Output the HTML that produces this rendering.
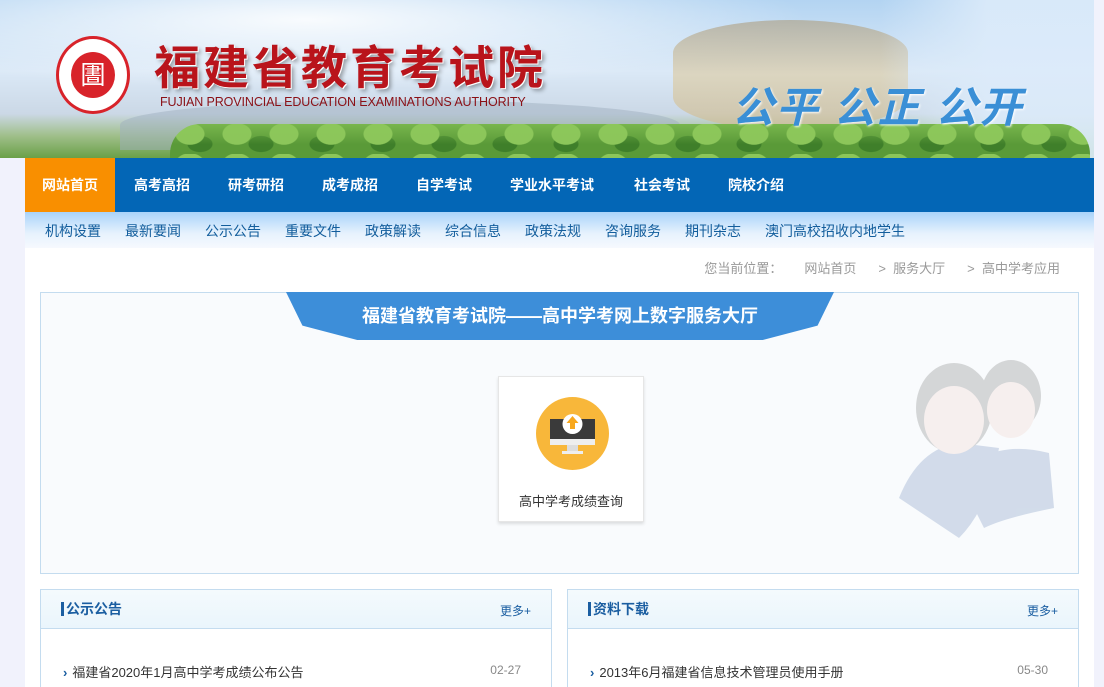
<!DOCTYPE html>
<html><head><meta charset="utf-8"><style>
*{margin:0;padding:0;box-sizing:border-box}
html,body{width:1104px;height:687px;overflow:hidden}
body{background:#f1f2fc;font-family:"Liberation Sans","Noto Sans CJK SC",sans-serif;position:relative}
.hdr{position:absolute;left:0;top:0;width:1094px;height:158px;background:linear-gradient(180deg,#b3d4f2 0%,#dbe9f7 45%,#cbd8e6 72%,#9fbf8a 86%,#6aa047 100%);overflow:hidden}
.hdr .sky{position:absolute;left:0;top:0;width:1094px;height:130px;background:radial-gradient(ellipse at 28% 15%,rgba(255,255,255,.9),rgba(255,255,255,0) 45%)}
.tulou{position:absolute;left:673px;top:20px;width:235px;height:110px;border-radius:50%/30%;background:linear-gradient(#b0a894,#dccfae 50%,#cdbd98);opacity:.75}
.fog{position:absolute;left:880px;top:0;width:214px;height:158px;background:linear-gradient(90deg,rgba(220,235,250,0),rgba(220,235,250,.9) 50%)}
.mtn{position:absolute;left:120px;top:100px;width:560px;height:50px;background:#9fb0bf;border-radius:50% 50% 0 0;opacity:.5}
.trees{position:absolute;left:170px;top:124px;width:920px;height:34px;background:linear-gradient(180deg,rgba(140,200,90,.6),rgba(60,120,40,0) 60%),radial-gradient(ellipse at 20px 10px,#8cc65a 14px,transparent 15px) 0 0/47px 30px,radial-gradient(ellipse at 30px 20px,#3f7f2a 12px,transparent 13px) 0 0/61px 34px,#5a9a38;border-radius:30px 30px 0 0}
.logo{position:absolute;left:56px;top:36px;width:74px;height:78px;border-radius:50%;background:#fff;border:3px solid #d8232a}
.logo i{position:absolute;left:12px;top:13px;width:44px;height:46px;border-radius:50%;background:#d8232a;color:#fff;font-style:normal;font-size:26px;text-align:center;line-height:46px}
.t1{position:absolute;left:154px;top:32px;font-size:46px;font-weight:bold;color:#b9141b;letter-spacing:3px;text-shadow:1px 1px 0 #fff,3px 3px 4px rgba(0,0,0,.35)}
.t2{position:absolute;left:160px;top:95px;font-size:12.5px;color:#8a1016;letter-spacing:-.1px}
.t3{position:absolute;left:732px;top:74px;font-size:42px;color:#3a8fd6;font-weight:bold;letter-spacing:2px;text-shadow:1px 1px 2px #fff;font-style:italic}
.nav{position:absolute;left:25px;top:158px;width:1069px;height:54px;background:#0366b6}
.nav a{position:absolute;top:0;height:54px;line-height:54px;color:#fff;font-size:14px;font-weight:bold}
.nav a.on{left:0;background:#f98f00;width:90px;text-align:center}
.sub{position:absolute;left:25px;top:212px;width:1069px;height:36px;background:linear-gradient(#a9d3fa,#e7f2fd 60%,#f6f9fe)}
.sub span{position:absolute;font-size:14px;color:#125d9c;line-height:38px}
.main{position:absolute;left:25px;top:248px;width:1069px;height:439px;background:#fff}
.bc{position:absolute;right:34px;top:10px;font-size:13px;color:#999}
.bc b{font-weight:normal;margin-left:22px}
.box{position:absolute;left:15px;top:44px;width:1039px;height:282px;border:1px solid #c4dcef;background:#f9fbfd}
.ribbon{position:absolute;left:245px;top:-1px;width:548px;height:48px;background:#3d8ed9;clip-path:polygon(0 0,100% 0,97% 70%,87% 100%,13% 100%,3% 70%);color:#fff;font-size:18px;font-weight:bold;text-align:center;line-height:48px}
.card{position:absolute;left:457px;top:83px;width:146px;height:146px;background:#fff;border:1px solid #e6e6e6;box-shadow:0 2px 3px rgba(0,0,0,.12)}
.card .c{position:absolute;left:37px;top:20px;width:73px;height:73px;border-radius:50%;background:#f8b73a}
.card p{position:absolute;top:114px;width:100%;text-align:center;font-size:13px;color:#333}
.pn{position:absolute;top:341px;width:512px;height:110px;border:1px solid #c4dcef;background:#fff}
.pn .h{height:39px;background:linear-gradient(#f4fafd,#eaf5fc);border-bottom:1px solid #c4dcef;position:relative}
.pn .h b{position:absolute;left:20px;top:12px;font-size:14px;color:#1b5ea1;border-left:3px solid #1b5ea1;padding-left:2px;line-height:14px}
.pn .h i{position:absolute;right:20px;top:12px;font-size:12px;color:#1b5ea1;font-style:normal}
.pn .r{position:absolute;left:22px;top:72px;font-size:13px;color:#333}
.pn .r:before{content:"›";color:#1b5ea1;font-weight:bold;margin-right:5px}
.pn .d{position:absolute;right:30px;top:73px;font-size:12px;color:#888}
</style></head><body>
<div class="hdr"><div class="sky"></div><div class="mtn"></div><div class="tulou"></div><div class="fog"></div><div class="trees"></div>
<div class="logo"><i>圕</i></div>
<div class="t1">福建省教育考试院</div>
<div class="t2">FUJIAN PROVINCIAL EDUCATION EXAMINATIONS AUTHORITY</div>
<div class="t3">公平 公正 公开</div></div>
<div class="nav"><a class="on">网站首页</a><a style="left:109px">高考高招</a><a style="left:203px">研考研招</a><a style="left:297px">成考成招</a><a style="left:391px">自学考试</a><a style="left:485px">学业水平考试</a><a style="left:609px">社会考试</a><a style="left:703px">院校介绍</a></div>
<div class="sub"><span style="left:20px">机构设置</span><span style="left:100px">最新要闻</span><span style="left:180px">公示公告</span><span style="left:260px">重要文件</span><span style="left:340px">政策解读</span><span style="left:420px">综合信息</span><span style="left:500px">政策法规</span><span style="left:580px">咨询服务</span><span style="left:660px">期刊杂志</span><span style="left:740px">澳门高校招收内地学生</span></div>
<div class="main">
<div class="bc">您当前位置：<b>网站首页</b><b>&gt;&nbsp;&nbsp;服务大厅</b><b>&gt;&nbsp;&nbsp;高中学考应用</b></div>
<div class="box"><div class="ribbon">福建省教育考试院——高中学考网上数字服务大厅</div>
<div class="card"><div class="c">
<svg width="73" height="73" viewBox="0 0 73 73"><rect x="14" y="22" width="45" height="26" fill="#3a3a3a"/><rect x="14" y="42" width="45" height="6" fill="#eee"/><rect x="31" y="48" width="11" height="6" fill="#ddd"/><rect x="26" y="54" width="21" height="3" fill="#eee"/><circle cx="36.5" cy="27" r="10" fill="#fff"/><path d="M36.5 19l-6 7h3.5v6h5v-6h3.5z" fill="#f8a81d"/></svg></div><p>高中学考成绩查询</p></div>
<svg style="position:absolute;left:858px;top:65px" width="160" height="180" viewBox="0 0 160 180"><g opacity=".22"><path d="M0 140q20-50 60-55l40 5q-10 60-40 90z" fill="#4a6fa8"/><path d="M60 120q30-40 90-25l5 55q-50 10-70 20z" fill="#4a6fa8"/><ellipse cx="55" cy="50" rx="38" ry="45" fill="#555"/><ellipse cx="55" cy="62" rx="30" ry="34" fill="#f0c8bc"/><ellipse cx="112" cy="38" rx="30" ry="36" fill="#555"/><ellipse cx="112" cy="52" rx="24" ry="28" fill="#f0c8bc"/></g></svg>
</div>
<div class="pn" style="left:15px"><div class="h"><b>公示公告</b><i>更多+</i></div><div class="r">福建省2020年1月高中学考成绩公布公告</div><div class="d">02-27</div></div>
<div class="pn" style="left:542px"><div class="h"><b>资料下载</b><i>更多+</i></div><div class="r">2013年6月福建省信息技术管理员使用手册</div><div class="d">05-30</div></div>
</div>
</body></html>
